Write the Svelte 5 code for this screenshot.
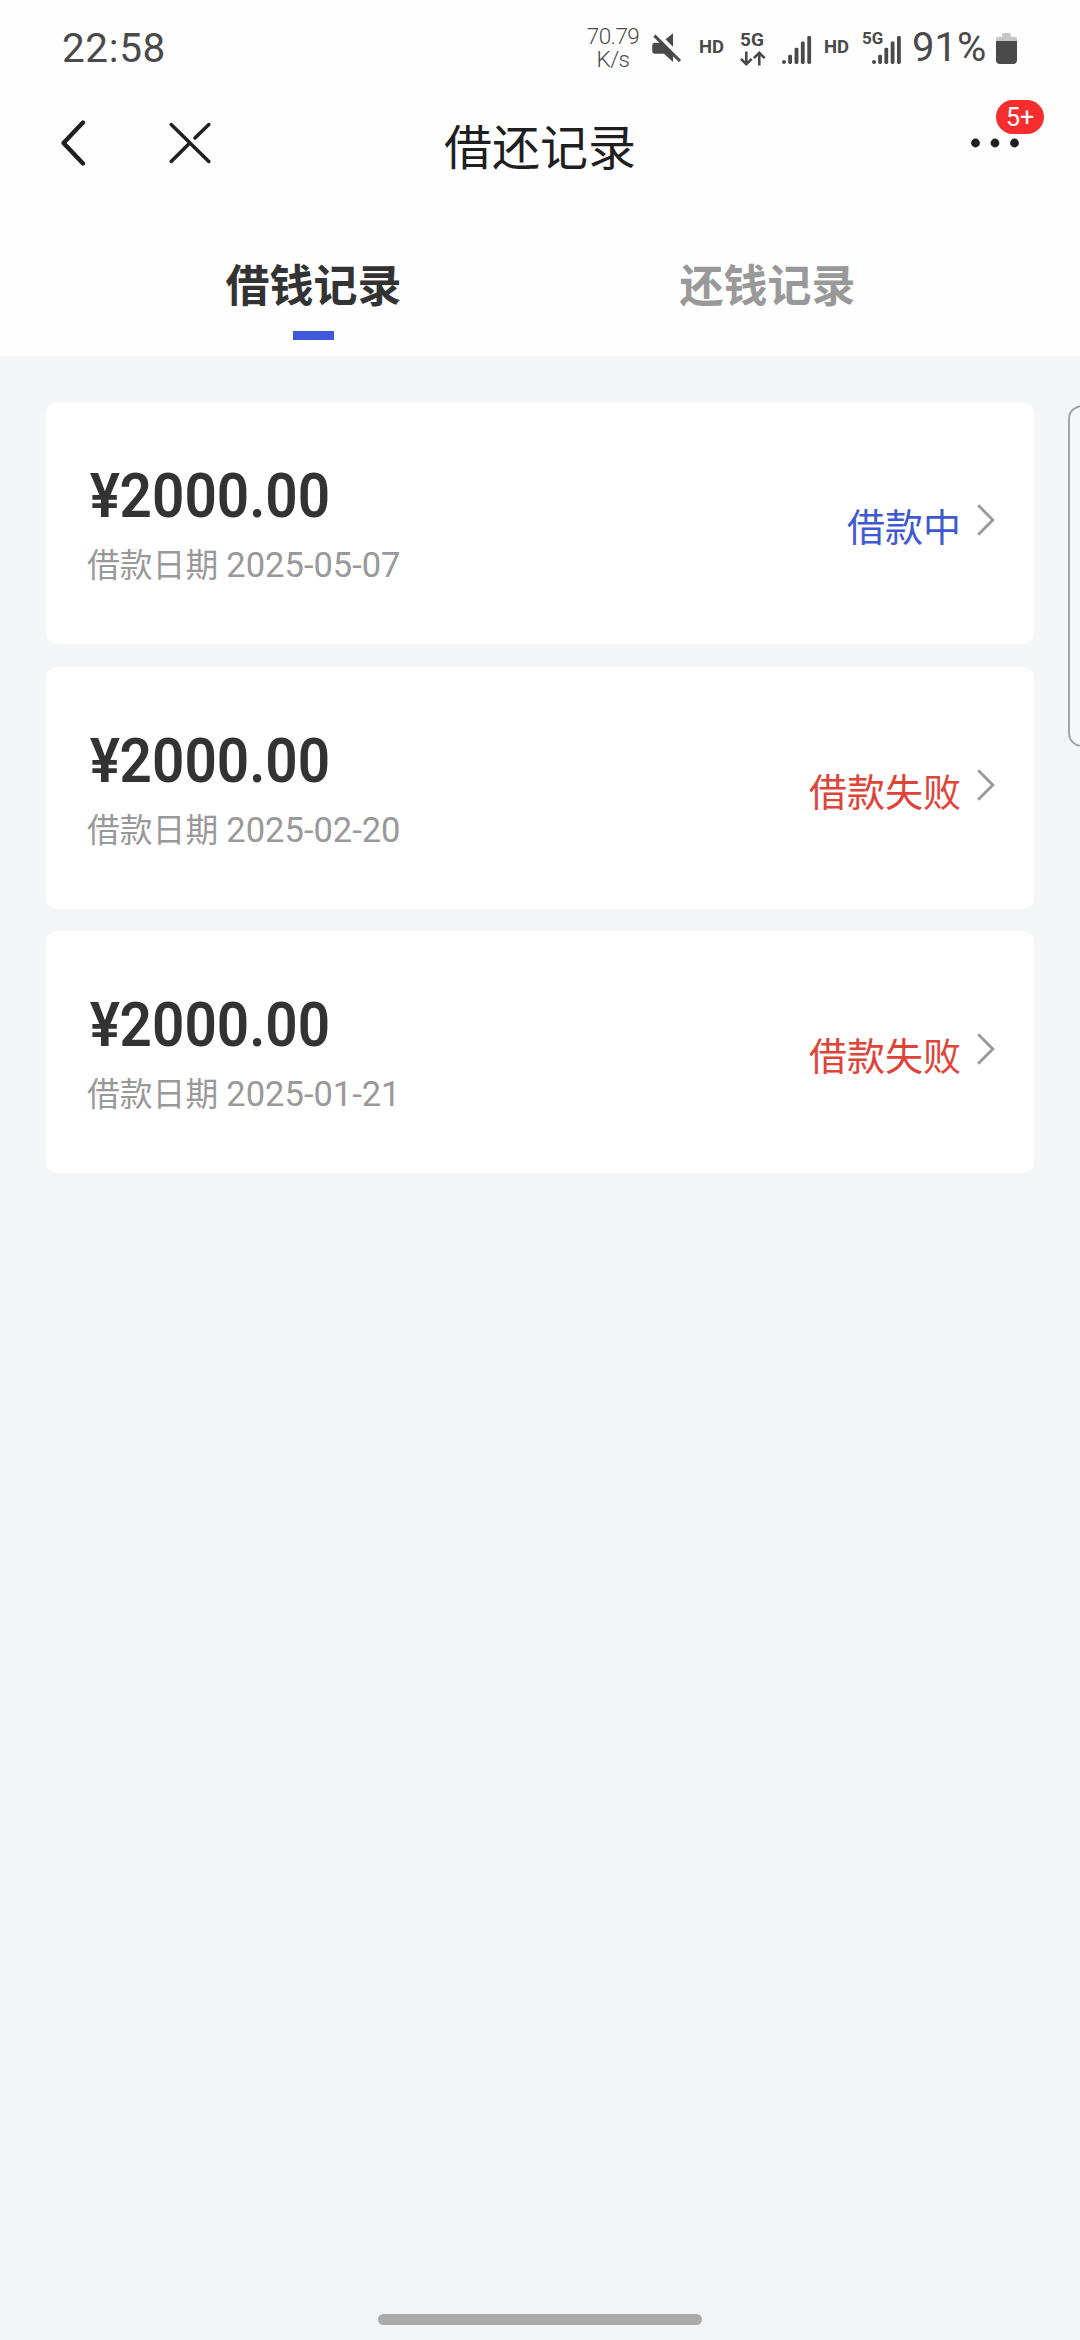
<script lang="ts">
  type LoanRecord = {
    id: number;
    amount: string;
    date: string;
    status: string;
    failed: boolean;
  };

  let tabs = ['借钱记录', '还钱记录'];
  let active = 0;

  let records: LoanRecord[] = [
    { id: 1, amount: '2000.00', date: '2025-05-07', status: '借款中', failed: false },
    { id: 2, amount: '2000.00', date: '2025-02-20', status: '借款失败', failed: true },
    { id: 3, amount: '2000.00', date: '2025-01-21', status: '借款失败', failed: true }
  ];
</script>

<div class="screen">
  <div class="status-bar">
    <span class="time">22:58</span>
    <div class="speed"><span>70.79</span><span>K/s</span></div>
    <svg class="mute" width="30" height="32" viewBox="0 0 30 32">
      <path d="M13.5 9.3 21 3.3V16.8Z" fill="#4a4a4a" />
      <path d="M3 12.8H9L21 24.8V32L12 23.8H3Q.2 23.8 .2 20.5V16.2Q.2 12.8 3 12.8Z" fill="#4a4a4a" />
      <path d="M2.4 5.6 28 31" stroke="#4a4a4a" stroke-width="3" />
    </svg>
    <span class="hd">HD</span>
    <div class="net">
      <span>5G</span>
      <svg width="26" height="15" viewBox="0 0 26 15" fill="none" stroke="#4a4a4a" stroke-width="2.6">
        <path d="M6.3 .5V13M.9 7.8 6.3 13.2 11.7 7.8M19.3 14.5V2M13.9 7.2 19.3 1.8 24.7 7.2" />
      </svg>
    </div>
    <svg class="signal" width="30" height="30" viewBox="0 0 30 30" fill="#4a4a4a">
      <rect x="0" y="26" width="4" height="4" rx="2" />
      <rect x="6.2" y="20.8" width="3.8" height="9.2" rx="1.4" />
      <rect x="12.6" y="13.8" width="3.8" height="16.2" rx="1.4" />
      <rect x="18.9" y="7.4" width="3.8" height="22.6" rx="1.4" />
      <rect x="25.3" y="2" width="3.8" height="28" rx="1.4" />
    </svg>
    <span class="hd second">HD</span>
    <div class="sim2">
      <span class="label">5G</span>
      <svg width="30" height="30" viewBox="0 0 30 30" fill="#4a4a4a">
        <rect x="0" y="26" width="4" height="4" rx="2" />
        <rect x="6.2" y="20.8" width="3.8" height="9.2" rx="1.4" />
        <rect x="12.4" y="13.8" width="3.8" height="16.2" rx="1.4" />
        <rect x="18.7" y="7.4" width="3.8" height="22.6" rx="1.4" />
        <rect x="25" y="2" width="3.8" height="28" rx="1.4" />
      </svg>
    </div>
    <span class="percent">91%</span>
    <svg class="battery" width="21" height="31" viewBox="0 0 21 31">
      <path d="M0 10V6Q0 3.8 3 3.8H6V2Q6 0 8 0H13Q15 0 15 2V3.8H18Q21 3.8 21 6V10Z" fill="#c6c6c6" />
      <path d="M0 8H21V27Q21 31 17 31H4Q0 31 0 27Z" fill="#4a4a4a" />
    </svg>
  </div>

  <header>
    <button class="back" aria-label="返回">
      <svg width="28" height="50" viewBox="0 0 28 50" fill="none">
        <path d="M23 4.5 3.5 25 23 45.5" stroke="#1f1f1f" stroke-width="4.4" stroke-linecap="round" stroke-linejoin="round" />
      </svg>
    </button>
    <button class="close" aria-label="关闭">
      <svg width="42" height="42" viewBox="0 0 42 42" fill="none">
        <path d="M2.2 2.5 39.8 39.5M39.8 2.5 26 16M20.5 21.3 2.2 39.5" stroke="#1f1f1f" stroke-width="3.5" stroke-linecap="round" />
      </svg>
    </button>
    <h1>借还记录</h1>
    <button class="more" aria-label="更多">
      <svg width="50" height="10" viewBox="0 0 50 10" fill="#1f1f1f">
        <circle cx="5.5" cy="5" r="4.4" />
        <circle cx="25" cy="5" r="4.4" />
        <circle cx="44.5" cy="5" r="4.4" />
      </svg>
      <span class="badge">5+</span>
    </button>
  </header>

  <nav>
    {#each tabs as tab, i}
      <button class="tab" class:active={active === i} on:click={() => (active = i)}>
        {tab}
        <span class="line"></span>
      </button>
    {/each}
  </nav>

  <main>
    {#each records as record (record.id)}
      <div class="card">
        <div class="info">
          <div class="amount"><span>¥</span>{record.amount}</div>
          <div class="date">借款日期 <span>{record.date}</span></div>
        </div>
        <div class="status" class:failed={record.failed}>{record.status}</div>
        <svg class="arrow" width="18" height="32" viewBox="0 0 18 32" fill="none">
          <path d="M1.2 1.2 15.8 16 1.2 30.8" stroke="#9a9a9a" stroke-width="2.9" />
        </svg>
      </div>
    {/each}
  </main>

  <div class="side-handle"></div>
  <div class="home-bar"></div>
</div>

<style>
  :global(body) {
    margin: 0;
  }

  .screen {
    position: relative;
    display: flex;
    flex-direction: column;
    width: 1080px;
    height: 2340px;
    overflow: hidden;
    background: #f4f5f7;
    font-family: Roboto, 'Noto Sans CJK SC', sans-serif;
  }

  button {
    border: none;
    background: none;
    padding: 0;
    font-family: inherit;
  }

  svg {
    display: block;
    flex: none;
  }

  .status-bar {
    display: flex;
    align-items: flex-start;
    height: 96px;
    box-sizing: border-box;
    padding-left: 62px;
    background: #fefefe;
    color: #4a4a4a;
    white-space: nowrap;
  }

  .time {
    width: 522px;
    margin-top: 25px;
    font-size: 40.5px;
    line-height: 46px;
    letter-spacing: 0.6px;
  }

  .speed {
    display: flex;
    flex-direction: column;
    align-items: center;
    width: 58px;
    margin-top: 25px;
    font-size: 22.5px;
    line-height: 23px;
    font-weight: 300;
    letter-spacing: -0.6px;
  }

  .mute {
    margin: 30px 0 0 10px;
  }

  .hd {
    width: 27px;
    margin: 36px 0 0 17px;
    font-size: 18.5px;
    line-height: 23px;
    font-weight: 700;
  }

  .net {
    display: flex;
    flex-direction: column;
    width: 26px;
    margin: 28px 0 0 14px;
    font-size: 19px;
    line-height: 23px;
    font-weight: 700;
  }

  .signal {
    margin: 34px 0 0 16px;
  }

  .hd.second {
    margin-left: 12px;
  }

  .sim2 {
    position: relative;
    width: 51px;
    margin-top: 34px;
    padding-left: 21px;
    box-sizing: border-box;
  }

  .sim2 .label {
    position: absolute;
    left: 11px;
    top: -7px;
    font-size: 17px;
    line-height: 23px;
    font-weight: 700;
  }

  .percent {
    width: 80px;
    margin: 25px 0 0 10px;
    font-size: 40px;
    line-height: 46px;
  }

  .battery {
    margin: 33px 0 0 4px;
  }

  header {
    display: flex;
    align-items: center;
    height: 94px;
    padding: 0 60px;
    background: #fefefe;
  }

  .close {
    margin-left: 81px;
  }

  h1 {
    flex: 1;
    margin: 11px 0 0;
    padding-right: 101px;
    font-size: 48px;
    line-height: 60px;
    font-weight: 400;
    text-align: center;
    color: #1f1f1f;
  }

  .more {
    position: relative;
  }

  .badge {
    position: absolute;
    left: 26px;
    bottom: 14px;
    width: 48px;
    height: 34px;
    border-radius: 17px;
    background: #f52d2d;
    color: #fff;
    font-size: 25px;
    line-height: 36px;
    text-align: center;
  }

  nav {
    display: flex;
    height: 166px;
    padding: 0 86px;
    background: #fefefe;
  }

  .tab {
    flex: 1;
    display: flex;
    flex-direction: column;
    align-items: center;
    padding: 67px 0 0 1px;
    font-size: 44px;
    line-height: 60px;
    font-weight: 700;
    color: #999;
  }

  .tab.active {
    color: #333;
  }

  .line {
    width: 41px;
    height: 9px;
    margin-top: 14px;
  }

  .active .line {
    background: #4059d8;
  }

  main {
    display: flex;
    flex-direction: column;
    gap: 22.7px;
    padding: 46px 46px 0;
  }

  .card {
    display: flex;
    height: 242px;
    border-radius: 12px;
    background: #fff;
  }

  .info {
    flex: 1;
    padding-left: 41px;
  }

  .amount {
    margin-top: 56px;
    padding-left: 3px;
    font-size: 62px;
    line-height: 76px;
    font-weight: 600;
    color: #333;
    transform: scaleX(0.915);
    transform-origin: left;
  }

  .amount span {
    margin-right: -0.5px;
  }

  .date {
    margin-top: 6px;
    font-size: 32.8px;
    line-height: 50px;
    color: #999;
  }

  .date span {
    font-size: 34.5px;
  }

  .status {
    margin: 98px 16px 0 0;
    font-size: 38px;
    line-height: 56px;
    color: #4059d0;
  }

  .status.failed {
    color: #e04438;
  }

  .arrow {
    margin: 102px 39px 0 0;
  }

  .side-handle {
    position: absolute;
    left: 1068px;
    top: 405px;
    width: 30px;
    height: 338px;
    border: 2px solid #a6a6a6;
    border-radius: 14px;
    background: #f6f7f9;
  }

  .home-bar {
    width: 324px;
    height: 11px;
    margin: auto auto 15px;
    border-radius: 6px;
    background: #aaa;
  }
</style>
